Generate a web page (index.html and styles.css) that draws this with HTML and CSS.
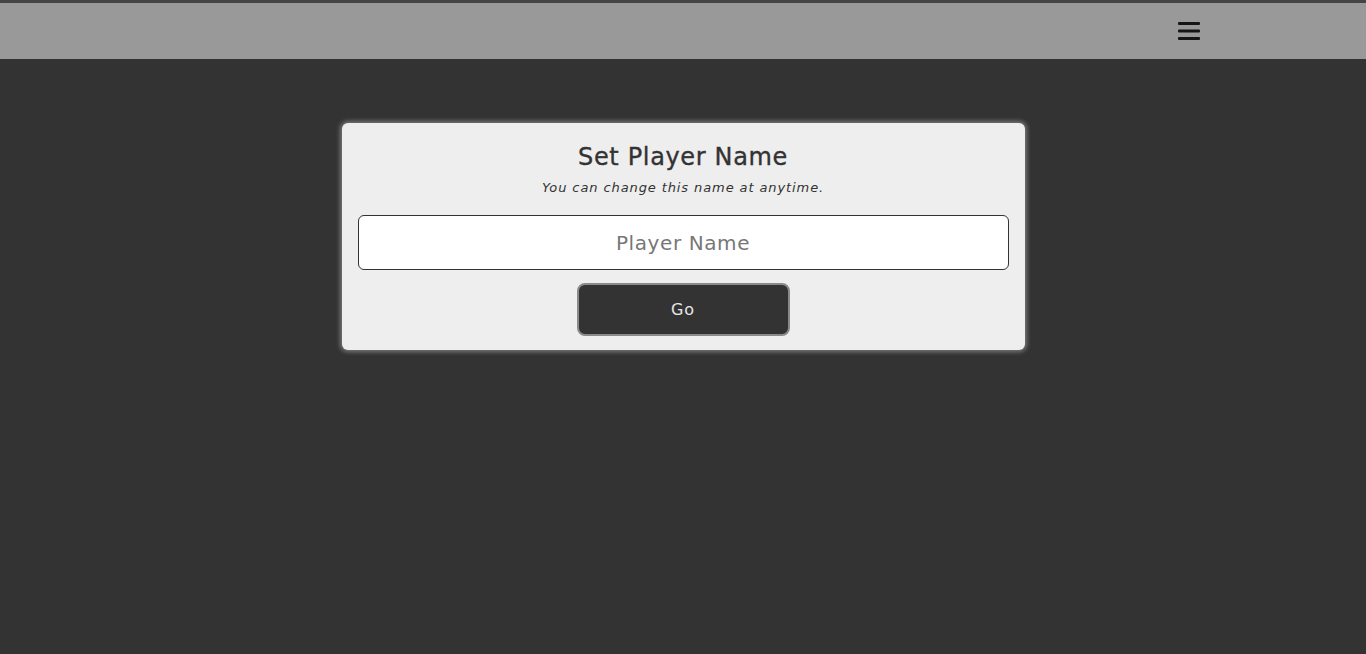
FILE: index.html
```html
<!DOCTYPE html>
<html lang="en">
<head>
<meta charset="utf-8">
<title>Set Player Name</title>
<link rel="stylesheet" href="styles.css">
</head>
<body>
<header class="topbar">
  <div class="topbar-inner">
    <button class="menu-btn" type="button" aria-label="Menu">
      <svg class="menu-icon" width="22" height="18" viewBox="0 0 22 18" aria-hidden="true">
        <rect x="0" y="0" width="22" height="3" rx="1" fill="#151515"/>
        <rect x="0" y="7.5" width="22" height="3" rx="1" fill="#151515"/>
        <rect x="0" y="15" width="22" height="3" rx="1" fill="#151515"/>
      </svg>
    </button>
  </div>
</header>
<main class="main">
  <section class="card">
    <h1 class="card-title">Set Player Name</h1>
    <p class="card-sub">You can change this name at anytime.</p>
    <input class="name-input" type="text" placeholder="Player Name">
    <button class="go-btn" type="button">Go</button>
  </section>
</main>
</body>
</html>
```

FILE: styles.css
```css
* { box-sizing: border-box; }
html, body {
  margin: 0;
  padding: 0;
  height: 100%;
}
body {
  background: #333333;
  font-family: "DejaVu Sans", "Open Sans", sans-serif;
  color: #333;
}
.topbar {
  background: #999999;
  border-top: 3px solid #444444;
  height: 59px;
}
.topbar-inner {
  display: flex;
  justify-content: flex-end;
  align-items: center;
  height: 100%;
  padding-right: 166px;
}
.menu-btn {
  background: none;
  border: 0;
  padding: 0;
  display: flex;
  cursor: pointer;
}
.menu-icon { display: block; }
.main {
  display: flex;
  justify-content: center;
  padding-top: 64px;
}
.card {
  width: 683px;
  background: #eeeeee;
  border-radius: 6px;
  box-shadow: 0 0 4px 2px #777;
  padding: 16px 16px 14px;
  display: flex;
  flex-direction: column;
  align-items: center;
}
.card-title {
  margin: 4px 0 0;
  font-size: 24px;
  font-weight: 500;
  line-height: 28px;
  letter-spacing: 0.65px;
  -webkit-text-stroke: 0.35px #333;
}
.card-sub {
  margin: 9px 0 0;
  font-size: 13px;
  font-style: italic;
  line-height: 16px;
  color: #333;
  letter-spacing: 0.9px;
}
.name-input {
  margin-top: 19px;
  width: 100%;
  height: 55px;
  border: 1px solid #333;
  border-radius: 6px;
  background: #fff;
  font-family: inherit;
  font-size: 20px;
  letter-spacing: 0.6px;
  text-align: center;
  color: #333;
  outline: none;
}
.name-input::placeholder {
  color: #777;
}
.go-btn {
  margin-top: 13px;
  width: 213px;
  height: 53px;
  background: #333333;
  border: 2px solid #8a8a8a;
  border-radius: 8px;
  color: #e6e6e6;
  font-family: inherit;
  font-size: 16px;
  letter-spacing: 1px;
  cursor: pointer;
}
```
